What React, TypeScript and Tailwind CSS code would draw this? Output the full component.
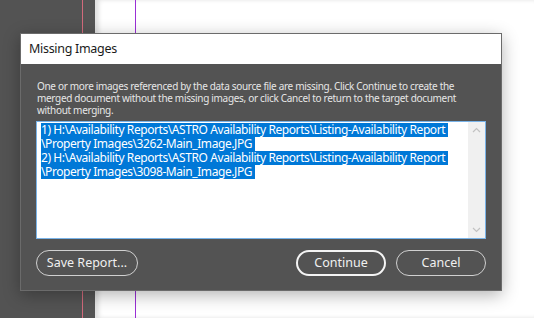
import React from "react";

const lines = [
  "1) H:\\Availability Reports\\ASTRO Availability Reports\\Listing-Availability Report ",
  "\\Property Images\\3262-Main_Image.JPG ",
  "2) H:\\Availability Reports\\ASTRO Availability Reports\\Listing-Availability Report ",
  "\\Property Images\\3098-Main_Image.JPG ",
];

const PillButton = ({ label, main, w }: { label: string; main?: boolean; w: string }) => (
  <button
    className={`${w} h-[26px] rounded-full text-[12.5px] text-[#f0f0f0] bg-[#535353] ${
      main ? "border-2 border-[#f4f4f4]" : "border border-[#d0d0d0]"
    }`}
  >
    {label}
  </button>
);

const App = () => {
  return (
    <div className="relative w-[534px] h-[318px] overflow-hidden flex bg-white font-['Noto_Sans',sans-serif]">
      <div className="w-[82px] h-full bg-[#535353]" />
      <div className="w-px h-full bg-[#d26a7c]" />
      <div className="w-[12px] h-full bg-[#545454]" />
      <div className="flex-1 h-full bg-white shadow-[inset_4px_0_4px_rgba(0,0,0,0.12)] pl-[40px]">
        <div className="w-px h-full bg-[#9a2fd6]" />
      </div>

      {/* dialog */}
      <div className="absolute left-[20px] top-[33px] w-[482px] h-[258px] border border-[#6b6b6b] bg-[#535353] shadow-[0_4px_16px_rgba(0,0,0,0.3)] flex flex-col">
        <div className="h-[30px] bg-white flex items-center pl-[8px] text-[12.5px] tracking-[-0.3px] text-[#1a1a1a]">
          Missing Images
        </div>
        <div className="flex-1 flex flex-col px-[15px] pt-[16px]">
          <p className="text-[10px] leading-[12px] tracking-[-0.32px] text-[#e6e6e6] pl-px whitespace-nowrap">
            One or more images referenced by the data source file are missing. Click Continue to create the
            <br />
            merged document without the missing images, or click Cancel to return to the target document
            <br />
            without merging.
          </p>
          <div className="mt-[5px] h-[118px] border border-[#79b3e8] bg-white flex">
            <div className="flex-1 min-w-0 overflow-hidden pl-[4px] pt-[1px] text-[12px] tracking-[-0.42px] leading-[14px]">
              {lines.map((l, i) => (
                <div key={i} className="whitespace-pre h-[14px]">
                  <span className="inline-block h-[14px] leading-[14px] bg-[#0078d7] text-white">{l}</span>
                </div>
              ))}
            </div>
            <div className="w-[17px] shrink-0 bg-[#f0f0f0] flex flex-col items-center justify-between py-[5px]">
              <svg width="9" height="6" viewBox="0 0 9 6">
                <path d="M1 5 L4.5 1.5 L8 5" fill="none" stroke="#c2c2c2" strokeWidth="1.2" />
              </svg>
              <svg width="9" height="6" viewBox="0 0 9 6">
                <path d="M1 1 L4.5 4.5 L8 1" fill="none" stroke="#c2c2c2" strokeWidth="1.2" />
              </svg>
            </div>
          </div>
          <div className="mt-[11px] flex items-center">
            <PillButton label="Save Report..." w="w-[102px]" />
            <div className="flex-1" />
            <PillButton label="Continue" main w="w-[90px]" />
            <div className="w-[10px]" />
            <PillButton label="Cancel" w="w-[90px]" />
          </div>
        </div>
      </div>
    </div>
  );
};

export default App;
